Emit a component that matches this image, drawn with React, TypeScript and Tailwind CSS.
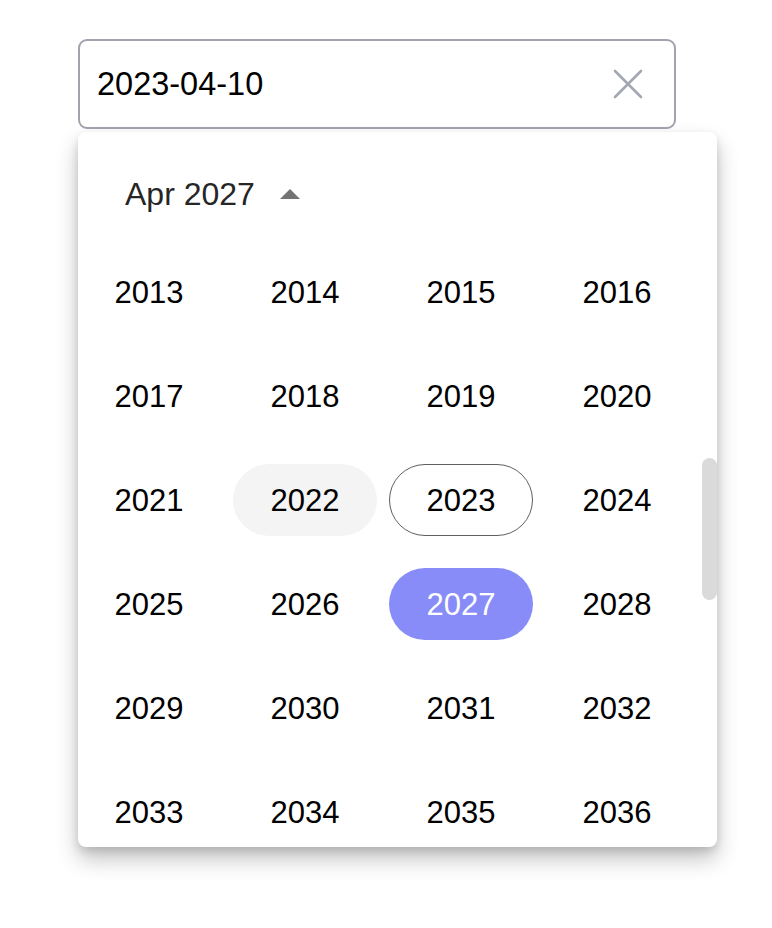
import React from "react";

const years = Array.from({ length: 24 }, (_, i) => 2013 + i);

function YearButton({ year }: { year: number }) {
  let cls = "text-black";
  if (year === 2022) cls = "bg-[#f4f4f4] text-black";
  if (year === 2023) cls = "border-[1.5px] border-[#5f5f5f] text-black";
  if (year === 2027) cls = "bg-[#878cf8] text-white";
  return (
    <div className="flex h-[104px] items-center justify-center">
      <button
        className={`flex h-[72px] w-[144px] items-center justify-center rounded-full text-[31px] leading-none ${cls}`}
      >
        {year}
      </button>
    </div>
  );
}

export default function App() {
  return (
    <div className="min-h-[928px] bg-white pl-[78px] pt-[39px] font-['Liberation_Sans',Arial,sans-serif]">
      <div className="flex h-[90px] w-[598px] items-center rounded-[9px] border-2 border-[#a2a3b1] pl-[17px] pr-[31px]">
        <span className="flex-1 text-[32.5px] leading-none text-black">2023-04-10</span>
        <svg width="30" height="30" viewBox="0 0 30 30" fill="none">
          <path d="M2 2L28 28M28 2L2 28" stroke="#a3a7b4" strokeWidth="2.6" strokeLinecap="round" />
        </svg>
      </div>

      <div className="mt-[3px] h-[715px] w-[639px] overflow-hidden rounded-[8px] bg-white shadow-[0_12px_22px_rgba(0,0,0,0.24),0_4px_8px_rgba(0,0,0,0.12)]">
        <div className="mb-[16px] mt-[32px] flex h-[60px] items-center pl-[47px]">
          <span className="text-[32px] leading-none text-[#262626]">Apr 2027</span>
          <svg className="ml-[25px]" width="20" height="10" viewBox="0 0 20 10">
            <path d="M0 10L10 0L20 10Z" fill="#747474" />
          </svg>
        </div>
        <div className="relative h-[607px] overflow-hidden">
          <div className="ml-[-1px] grid grid-cols-[repeat(4,144px)] gap-x-[12px]">
            {years.map((y) => (
              <YearButton key={y} year={y} />
            ))}
          </div>
          {/* scrollbar thumb */}
          <div className="absolute right-0 top-[218px] h-[142px] w-[15px] rounded-full bg-[#dadada]" />
        </div>
      </div>
    </div>
  );
}
